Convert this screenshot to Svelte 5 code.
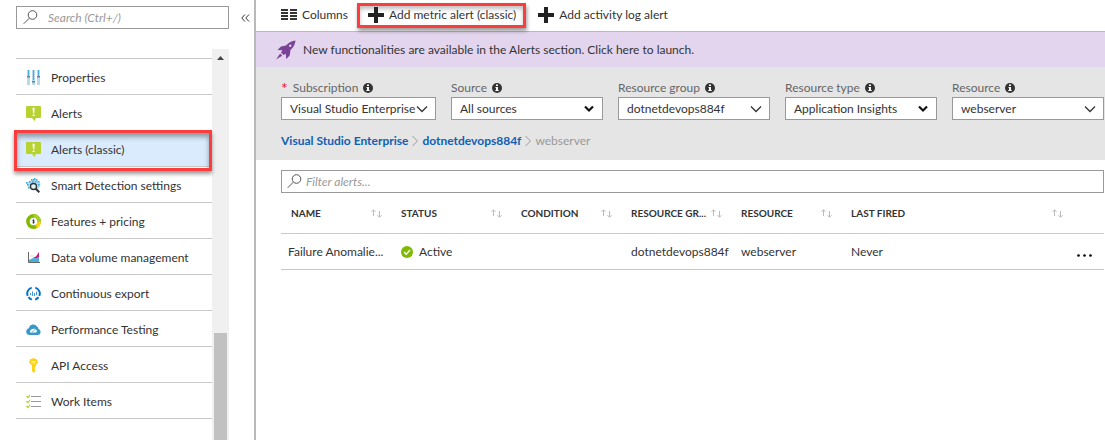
<script>
  const menu = [
    { id: 'properties', label: 'Properties' },
    { id: 'alert', label: 'Alerts' },
    { id: 'alert', label: 'Alerts (classic)', selected: true },
    { id: 'detection', label: 'Smart Detection settings' },
    { id: 'pricing', label: 'Features + pricing' },
    { id: 'volume', label: 'Data volume management' },
    { id: 'export', label: 'Continuous export' },
    { id: 'testing', label: 'Performance Testing' },
    { id: 'key', label: 'API Access' },
    { id: 'items', label: 'Work Items' }
  ];
  const filters = [
    { id: 'subscription', label: 'Subscription', value: 'Visual Studio Enterprise', required: true },
    { id: 'source', label: 'Source', value: 'All sources', bold: true },
    { id: 'group', label: 'Resource group', value: 'dotnetdevops884f' },
    { id: 'type', label: 'Resource type', value: 'Application Insights', bold: true },
    { id: 'resource', label: 'Resource', value: 'webserver' }
  ];
  const columns = ['NAME', 'STATUS', 'CONDITION', 'RESOURCE GR...', 'RESOURCE', 'LAST FIRED'];
  const dots = [[5,1],[8,0],[3,3],[6,3],[9,3],[1,6],[4,6],[12,3],[12,6],[2,9],[0,4],[7,1],[10,1]];
</script>

{#snippet lens()}
  <svg class="lens" viewBox="0 0 15 15" width="15" height="15" aria-hidden="true">
    <circle cx="9.5" cy="5" r="4.3" /><path d="M6.3 8.2 0.7 13.8" />
  </svg>
{/snippet}

{#snippet plus()}
  <svg viewBox="0 0 16 16" width="16" height="16" aria-hidden="true"><path d="M6 0h4v6h6v4h-6v6H6v-6H0V6h6z" fill="#222" /></svg>
{/snippet}

{#snippet menuIcon(id)}
  <svg viewBox="0 0 15 15" width="15" height="15" aria-hidden="true">
    {#if id === 'properties'}
      <path d="M1 0h3v15H1zM6 0h3v15H6zM11 0h3v15h-3z" fill="#b5dcec" />
      <path d="M2 0h1v6H2zM7 0h1v10H7zM12 0h1v6h-1z" fill="#45aed6" />
      <path d="M1 6h3v1.500H1zM6 11h3v1.500H6zM11 6h3v1.500h-3z" fill="#74818a" />
    {:else if id === 'alert'}
      <path d="M1 0h13q1 0 1 1v10q0 1-1 1h-4l-1.500 3L6 12H1q-1 0-1-1V1q0-1 1-1z" fill="#b7d332" />
      <path d="M6.500 1.800h2.200l-.4 5.500H7zM6.600 8.400h2V10h-2z" fill="#fff" />
    {:else if id === 'detection'}
      <path d="M4 3 8 .5l4 2 2.500 3L14 9l-3 3-6-1-3-1L.5 5z" fill="#a9dcf1" />
      {#each dots as [x, y]}<rect {x} {y} width="1.500" height="1.500" fill="#3fa5d4" />{/each}
      <circle cx="7.500" cy="8.500" r="3" fill="#e3f3fa" stroke="#333" stroke-width="1.300" />
      <path d="m9.800 10.800 3.500 3.500" stroke="#333" stroke-width="2" />
    {:else if id === 'pricing'}
      <circle cx="7.500" cy="7.500" r="5.600" fill="#fff" stroke="#7fba00" stroke-width="3.600" />
      <path d="M7.500 1.900a5.600 5.600 0 0 1 5.600 5.600" fill="none" stroke="#a6ce2c" stroke-width="3.600" />
      <path d="M13.100 7.500a5.600 5.600 0 0 1-3.100 5" fill="none" stroke="#fcd116" stroke-width="3.600" />
      <path d="M8.500 6.300Q6.700 5.600 6.700 6.700T8.300 7.900 6.500 8.800M7.500 5.300v4.500" fill="none" stroke="#333" stroke-width=".8" />
    {:else if id === 'volume'}
      <path d="M3 10 7 8l3 .5 3-1.500v5H3z" fill="#48afd9" />
      <path d="m7 7.500 3-1L13 2v5l-3 1.500z" fill="#c51786" />
      <path d="M2.500 2v10.500H14" fill="none" stroke="#666" /><path d="M4 6h4" stroke="#ddd" />
    {:else if id === 'export'}
      <path d="M5.700 1.600a6.200 6.200 0 0 0-4 8.300M2.500 11.200q1.200 1.700 3.300 2.400M9.300 1.600a6.200 6.200 0 0 1 4 8.300M12.500 11.200q-1.200 1.700-3.300 2.400" fill="none" stroke="#0072c6" stroke-width="2" />
      <path d="M4.500 7v2M6.500 5.500V10M8.500 7v3M10.500 5.500V9" stroke="#3f9bdc" />
    {:else if id === 'testing'}
      <path d="M3.500 13A3.400 3.400 0 0 1 2.800 6.300 4.500 4.500 0 0 1 11 4.500 3 3 0 0 1 12.500 7 3.100 3.100 0 0 1 12 13z" fill="#3999c6" />
      <path d="M4 10.500Q3.800 6.500 8.500 6.800l2.500 1.700-.7 2z" fill="#fff" /><path d="m6 9.800 3-2" stroke="#8cc6e3" />
    {:else if id === 'key'}
      <path d="M7.500 0 11 1.500 12 4.500 9.500 7.500v1.500l-1 1 1 1-1 1 1 1-1.500 2L6 13V7.500L3 4.500 4 1.500z" fill="#fcd116" />
      <path d="M5.500 3.500h4M5.500 5h4" stroke="#fff4ae" />
    {:else}
      <path d="M5 2.500h10M5 7.500h10M5 12.500h10" stroke="#999" />
      <path d="m.5 2 1.500 1.500L4 1M.5 7 2 8.500 4 6M.5 12 2 13.500 4 11" fill="none" stroke="#a9cf38" stroke-width="1.200" />
    {/if}
  </svg>
{/snippet}

<div class="page">
  <aside>
    <div class="top">
      <div class="search">
        {@render lens()}
        <input type="text" aria-label="Search" placeholder="Search (Ctrl+/)" />
      </div>
      <button class="collapse" aria-label="Collapse menu">
        <svg viewBox="0 0 9 8" width="9" height="8" aria-hidden="true"><path d="M4 .5.800 4 4 7.500M8 .5 4.800 4 8 7.500" /></svg>
      </button>
    </div>
    <div class="scroller">
      <nav>
        {#each menu as item}
          <a href="#{item.id}" class:selected={item.selected}>
            {@render menuIcon(item.id)}<span>{item.label}</span>
          </a>
        {/each}
      </nav>
      <div class="track">
        <svg viewBox="0 0 7 4" width="7" height="4" aria-hidden="true"><path d="M0 4 3.500 0 7 4z" fill="#444" /></svg>
        <div class="thumb"></div>
      </div>
    </div>
  </aside>

  <main>
    <div class="toolbar">
      <button>
        <svg viewBox="0 0 16 11" width="16" height="11" aria-hidden="true"><path d="M0 0h7v2H0zM9 0h7v2H9zM0 3h7v2H0zM9 3h7v2H9zM0 6h7v2H0zM9 6h7v2H9zM0 9h7v2H0zM9 9h7v2H9z" fill="#333" /></svg>
        Columns
      </button>
      <button class="marked">{@render plus()}Add metric alert (classic)</button>
      <button>{@render plus()}Add activity log alert</button>
    </div>

    <a class="banner" href="#alerts">
      <svg viewBox="0 0 20 20" width="20" height="20" aria-hidden="true">
        <path d="M19.500.5Q14 1 10 5.500L5 6.500 1.500 10l5 .3L5 12.500l2.500 2.500 2.300-1.300.4 5.300 3.500-3.500.8-5.500Q19 6 19.500.5z" fill="#7b4397" />
        <path d="M4.200 13.500 0 19.500 6.200 15.700z" fill="#7b4397" /><circle cx="14.200" cy="5.800" r="1.200" fill="#e3d5ee" />
      </svg>
      New functionalities are available in the Alerts section. Click here to launch.
    </a>

    <section class="scope">
      <div class="filters">
        {#each filters as f}
          <div class="field">
            <label for={f.id}>
              {#if f.required}<span class="star">*</span>{/if}{f.label}
              <svg viewBox="0 0 10 10" width="10" height="10" aria-hidden="true"><circle cx="5" cy="5" r="5" fill="#333" /><path d="M4 1.500h2v1.500H4zM3.500 4H6v3h.7v1H3.300V7H4V5h-.5z" fill="#fff" /></svg>
            </label>
            <div class="select">
              <select id={f.id}><option>{f.value}</option></select>
              <svg class:bold={f.bold} viewBox="0 0 12 8" width="12" height="8" aria-hidden="true">
                <path d={f.bold ? 'M2 1.500 6 5.500 10 1.500' : 'M1 1.500 6 6.500 11 1.500'} />
              </svg>
            </div>
          </div>
        {/each}
      </div>
      <div class="crumbs">
        <a href="#subscription">Visual Studio Enterprise</a>
        <svg viewBox="0 0 6 12" width="6" height="12" aria-hidden="true"><path d="m.5 1 5 5-5 5" /></svg>
        <a href="#group">dotnetdevops884f</a>
        <svg viewBox="0 0 6 12" width="6" height="12" aria-hidden="true"><path d="m.5 1 5 5-5 5" /></svg>
        <span>webserver</span>
      </div>
    </section>

    <section class="results">
      <div class="search wide">
        {@render lens()}
        <input type="text" aria-label="Filter alerts" placeholder="Filter alerts..." />
      </div>
      <table>
        <colgroup><col class="c110" /><col class="c120" /><col class="c110" /><col class="c110" /><col class="c110" /><col /><col class="more" /></colgroup>
        <thead>
          <tr>
            {#each columns as c}
              <th>
                <button><span>{c}</span>
                  <svg viewBox="0 0 11 9" width="11" height="9" aria-hidden="true"><path d="M2.500 7V.8M.5 2.800l2-2 2 2M8.500 2v6.200M6.500 6.200l2 2 2-2" /></svg>
                </button>
              </th>
            {/each}
            <th></th>
          </tr>
        </thead>
        <tbody>
          <tr>
            <td class="name">Failure Anomalie...</td>
            <td>
              <span class="status">
                <svg viewBox="0 0 12 12" width="12" height="12" aria-hidden="true"><circle cx="6" cy="6" r="6" fill="#7fba00" /><path d="m3 6 2.200 2.200L9 4" fill="none" stroke="#fff" stroke-width="1.400" /></svg>
                Active
              </span>
            </td>
            <td></td>
            <td>dotnetdevops884f</td>
            <td>webserver</td>
            <td>Never</td>
            <td class="menu">
              <button aria-label="More actions"><svg viewBox="0 0 15 3" width="15" height="3" aria-hidden="true"><circle cx="1.500" cy="1.500" r="1.300" /><circle cx="7.500" cy="1.500" r="1.300" /><circle cx="13.500" cy="1.500" r="1.300" /></svg></button>
            </td>
          </tr>
        </tbody>
      </table>
    </section>
  </main>
</div>

<style>
  .page, .page * { box-sizing: border-box; }
  .page {
    display: grid;
    grid-template-columns: 256px minmax(0, 1fr);
    min-height: 100vh;
    background: #fff;
    color: #333;
    font: 12px/18px Lato, "Open Sans", sans-serif;
  }
  button, input, select { font: inherit; color: inherit; }
  button { border: 0; padding: 0; background: none; cursor: pointer; }
  a { text-decoration: none; color: inherit; }
  svg { flex: none; }

  aside { display: flex; flex-direction: column; border-right: 2px solid #b9b9b9; padding: 6px 0 0 16px; }
  .top { display: flex; align-items: center; gap: 12px; }
  .search { display: flex; align-items: center; gap: 10px; width: 213px; height: 23px; border: 1px solid #999; padding-left: 6px; background: #fff; }
  .search.wide { width: 100%; gap: 4px; padding-left: 5px; }
  .search input { flex: 1; min-width: 0; border: 0; padding: 0; outline: 0; background: none; }
  .search input::placeholder { color: #999; font-style: italic; opacity: 1; }
  .lens { fill: none; stroke: #555; }
  .collapse { display: flex; }
  .collapse svg { fill: none; stroke: #333; }

  .scroller { display: flex; flex: 1; width: 213px; margin-top: 20px; }
  nav { flex: 1; padding-top: 9px; }
  nav a { position: relative; display: flex; align-items: center; gap: 10px; height: 36px; padding: 2px 0 0 10px; border-bottom: 1px solid #c8c8c8; }
  nav a:first-child { height: 37px; border-top: 1px solid #c8c8c8; }
  nav a.selected { background: #d9ebfd; }
  nav a.selected::after {
    content: "";
    position: absolute;
    inset: -1px 0 -5px -2px;
    border: 3px solid #fa3e3e;
    box-shadow: 0 3px 4px rgba(0, 0, 0, .4), inset 0 4px 5px rgba(0, 0, 0, .35);
    z-index: 1;
  }
  .track { display: flex; flex-direction: column; align-items: center; width: 17px; padding-top: 7px; background: #f0f0f0; }
  .thumb { width: 13px; height: 107px; margin-top: auto; background: #c1c1c1; }

  .toolbar { display: flex; align-items: center; gap: 9px; height: 32px; padding-left: 25px; border-bottom: 1px solid #b9b9b9; }
  .toolbar button { display: flex; align-items: center; gap: 5px; height: 25px; padding-bottom: 2px; white-space: nowrap; }
  .toolbar .marked { margin-right: 3px; padding: 0 7px 2px 8px; border: 3px solid #fa3e3e; box-shadow: 1px 3px 4px rgba(0, 0, 0, .4), inset 0 3px 4px rgba(0, 0, 0, .25); }
  .banner { display: flex; align-items: center; gap: 7px; height: 35px; padding-left: 20px; background: #e3d5ee; }

  .scope { padding: 12px 1px 10px 25px; background: #e5e5e5; }
  .filters { display: grid; grid-template-columns: 155fr 152fr 152fr 152fr 152fr; gap: 15px; }
  .field { min-width: 0; }
  label { display: flex; align-items: center; gap: 5px; color: #666; white-space: nowrap; }
  .star { color: #e81123; font-size: 16px; line-height: 12px; }
  .select { position: relative; }
  select { appearance: none; display: block; width: 100%; height: 23px; border: 1px solid #999; border-radius: 0; padding: 0 0 0 8px; background: #fff; }
  .select svg { position: absolute; right: 8px; top: 8px; fill: none; stroke: #333; stroke-width: 1.3; pointer-events: none; }
  .select svg.bold { stroke: #111; stroke-width: 2.2; }
  .crumbs { display: flex; align-items: center; gap: 4px; margin-top: 12px; color: #999; }
  .crumbs a { color: #0f5fb4; font-weight: 700; }
  .crumbs svg { fill: none; stroke: #999; }

  .results { padding: 10px 1px 0 25px; }
  table { width: 100%; table-layout: fixed; border-collapse: collapse; margin-top: 4px; }
  .c110 { width: 110px; }
  .c120 { width: 120px; }
  .more { width: 32px; }
  th, td { height: 36px; padding: 2px 0 0 10px; border-bottom: 1px solid #c8c8c8; text-align: left; white-space: nowrap; }
  th { padding-bottom: 5px; font-size: 10px; }
  th button { display: flex; align-items: center; justify-content: space-between; width: 100%; padding-right: 9px; font-weight: 700; }
  th svg { fill: none; stroke: #bbb; }
  td.name { padding-left: 7px; }
  .status { display: flex; align-items: center; gap: 6px; }
  td.menu { padding: 8px 0 0 5px; }
  td.menu button { display: flex; }
</style>
